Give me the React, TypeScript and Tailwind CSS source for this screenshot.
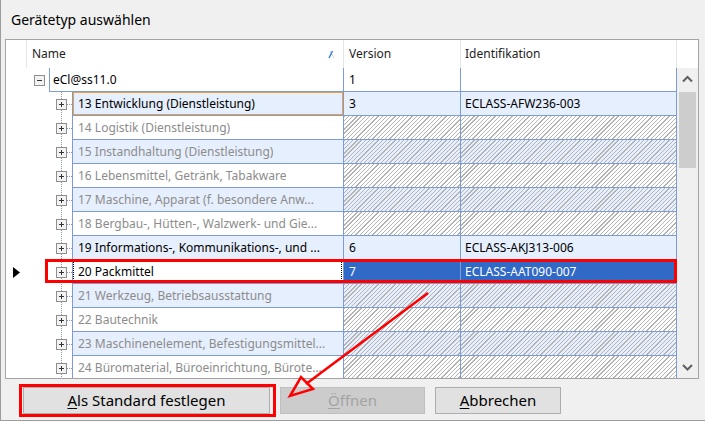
import React from 'react';

type Row = {
  label: string;
  version?: string;
  ident?: string;
  kind: 'root' | 'active' | 'disabled' | 'selected';
  focus?: boolean;
};

const rows: Row[] = [
  { label: 'eCl@ss11.0', version: '1', ident: '', kind: 'root' },
  { label: '13 Entwicklung (Dienstleistung)', version: '3', ident: 'ECLASS-AFW236-003', kind: 'active', focus: true },
  { label: '14 Logistik (Dienstleistung)', kind: 'disabled' },
  { label: '15 Instandhaltung (Dienstleistung)', kind: 'disabled' },
  { label: '16 Lebensmittel, Getränk, Tabakware', kind: 'disabled' },
  { label: '17 Maschine, Apparat (f. besondere Anw...', kind: 'disabled' },
  { label: '18 Bergbau-, Hütten-, Walzwerk- und Gie...', kind: 'disabled' },
  { label: '19 Informations-, Kommunikations-, und ...', version: '6', ident: 'ECLASS-AKJ313-006', kind: 'active' },
  { label: '20 Packmittel', version: '7', ident: 'ECLASS-AAT090-007', kind: 'selected' },
  { label: '21 Werkzeug, Betriebsausstattung', kind: 'disabled' },
  { label: '22 Bautechnik', kind: 'disabled' },
  { label: '23 Maschinenelement, Befestigungsmittel...', kind: 'disabled' },
  { label: '24 Büromaterial, Büroeinrichtung, Bürote...', kind: 'disabled' },
];

const hatch =
  'bg-[image:repeating-linear-gradient(135deg,#b3b3b3_0px,#b3b3b3_0.9px,transparent_0.9px,transparent_3px)]';

function RootTree() {
  return (
    <svg width="22" height="24" className="block shrink-0">
      <rect x="7.5" y="7.5" width="10" height="10" fill="#f3f3f3" stroke="#8e8e8e" />
      <path d="M10 12.5h5" stroke="#333" />
    </svg>
  );
}

function ChildTree() {
  return (
    <svg width="45" height="24" className="block shrink-0">
      <line x1="34.5" y1="0" x2="34.5" y2="24" stroke="#8396bd" strokeDasharray="1 1" />
      <line x1="40" y1="12.5" x2="45" y2="12.5" stroke="#8396bd" strokeDasharray="1 1" />
      <rect x="29.5" y="7.5" width="10" height="10" fill="#f3f3f3" stroke="#8e8e8e" />
      <path d="M32 12.5h5M34.5 10v5" stroke="#333" />
    </svg>
  );
}

function Chevron({ down }: { down?: boolean }) {
  return (
    <svg width="21" height="22" className="block">
      <path d={down ? 'M6 9l4.5 4.5L15 9' : 'M6 13.5L10.5 9l4.5 4.5'} fill="none" stroke="#606060" strokeWidth="2" />
    </svg>
  );
}

export default function App() {
  return (
    <div className="relative w-[705px] h-[421px] overflow-hidden bg-[#f0f0f0] border-l border-b border-[#9c9c9c] font-['Noto_Sans',sans-serif] text-black">
      <div className="h-[39px] pl-[10px] flex items-center text-[14px]">Gerätetyp auswählen</div>

      <div className="ml-[4px] w-[694px] h-[340px] border border-[#a3a3a3] bg-white overflow-hidden text-[12px]">
        <div className="flex h-[28px] text-[#1e1e1e]">
          <div className="w-[21px] border-r border-[#e5e5e5]" />
          <div className="w-[317px] border-r border-[#e5e5e5] pl-[5px] pr-[8px] flex items-center justify-between">
            <span>Name</span>
            <svg width="7" height="9" className="block">
              <path d="M2 1L6 8" stroke="#d0d0d0" />
              <path d="M1 8L4.5 1" stroke="#2f7ad8" strokeWidth="1.4" />
            </svg>
          </div>
          <div className="w-[117px] border-r border-[#e5e5e5] pl-[5px] flex items-center">Version</div>
          <div className="w-[216px] border-r border-[#e5e5e5] pl-[4px] flex items-center">Identifikation</div>
          <div className="w-[21px]" />
        </div>

        <div className="flex h-[310px]">
          <div className="w-[671px] shrink-0">
            {rows.map((r, i) => {
              const blue = i % 2 === 1;
              const rowBg = blue ? 'bg-[#e6effd]' : 'bg-white';
              const hatched = r.kind === 'disabled';
              const sel = r.kind === 'selected';
              const dataCell = sel ? 'bg-[#3169c6] text-white' : `${rowBg} ${hatched ? hatch : ''}`;
              return (
                <div key={i} className="flex h-[24px]">
                  <div className="w-[21px] shrink-0 flex items-center justify-center">
                    {sel && (
                      <svg width="7" height="11" className="block">
                        <path d="M0 0L7 5.5L0 11z" fill="#000" />
                      </svg>
                    )}
                  </div>
                  {r.kind === 'root' ? <RootTree /> : <ChildTree />}
                  <div
                    className={`flex-1 min-w-0 flex items-center border-l border-b border-[#7f9bd6] ${
                      r.kind === 'root' ? 'pl-[3px]' : 'pl-[5px]'
                    } ${sel ? 'bg-white outline-1 outline-dotted outline-black -outline-offset-2' : rowBg} ${
                      r.focus ? 'shadow-[inset_0_0_0_1px_#e9a23b]' : ''
                    } ${hatched ? 'text-[#8c8c8c]' : 'text-black'}`}
                  >
                    <span className="truncate">{r.label}</span>
                  </div>
                  <div className={`w-[117px] shrink-0 flex items-center pl-[5px] border-l border-b border-[#7f9bd6] ${dataCell}`}>
                    {r.version}
                  </div>
                  <div className={`w-[217px] shrink-0 flex items-center pl-[4px] border-l border-r border-b border-[#7f9bd6] ${dataCell}`}>
                    {r.ident}
                  </div>
                </div>
              );
            })}
          </div>
          <div className="w-[21px] shrink-0 bg-[#f0f0f0] flex flex-col">
            <Chevron />
            <div className="mt-[2px] ml-[2px] w-[17px] h-[76px] bg-[#cdcdcd]" />
            <div className="flex-1" />
            <Chevron down />
          </div>
        </div>
      </div>

      <div className="flex mt-[8px] ml-[22px] gap-[10px] text-[15px]">
        <button className="w-[247px] h-[27px] bg-[#e1e1e1] border border-[#adadad] text-black">
          <span className="underline underline-offset-2">A</span>ls Standard festlegen
        </button>
        <button className="w-[145px] h-[27px] bg-[#cccccc] border border-[#bfbfbf] text-[#a3a3a3]">
          <span className="underline underline-offset-2">Ö</span>ffnen
        </button>
        <button className="w-[126px] h-[27px] bg-[#e1e1e1] border border-[#adadad] text-black">
          <span className="underline underline-offset-2">A</span>bbrechen
        </button>
      </div>

      <svg width="705" height="421" className="absolute inset-0 pointer-events-none">
        <rect x="45.5" y="260.5" width="629" height="21" fill="none" stroke="#ff0000" strokeWidth="3" />
        <rect x="19.5" y="385.5" width="254" height="30" fill="none" stroke="#ff0000" strokeWidth="3" />
        <line x1="427" y1="293" x2="305" y2="384" stroke="#ff0000" strokeWidth="2.5" />
        <path d="M289 396L300 377L312 389Z" fill="none" stroke="#ff0000" strokeWidth="2.5" strokeLinejoin="miter" />
      </svg>
    </div>
  );
}
